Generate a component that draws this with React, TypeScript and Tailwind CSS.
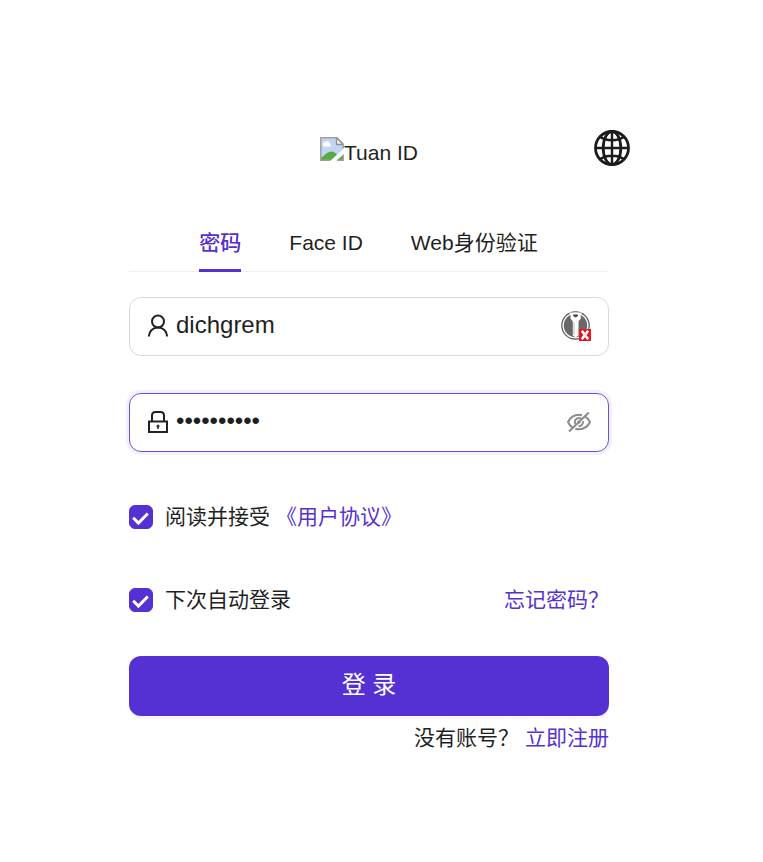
import { useState } from "react";

function BrokenImage() {
  return (
    <svg viewBox="0 0 24 24" className="h-6 w-6 shrink-0" aria-hidden="true">
      <path d="M0.8 0.8H17L23.2 7V13L12 23.2H0.8Z" fill="#c3d5f6" />
      <path d="M3 8.5a2.2 2.2 0 0 1 2-3.3a2.6 2.6 0 0 1 4.6 1.2a1.6 1.6 0 0 1 .4 3H4Z" fill="#fff" />
      <path d="M1 23V20.500C5 18.500 7 14.500 11.500 14.500C14 14.500 15.500 16 17 17.500L11 23Z" fill="#57ab40" />
      <path d="M24 11.500L10.500 24H15.500L24 16.500Z" fill="#fff" />
      <path d="M23 18V23H17Z" fill="#57ab40" />
      <path d="M16.500 0.800V7.500H23.200Z" fill="#f4f4f4" stroke="#909090" strokeWidth="1.3" />
      <path d="M10.500 23.200H0.800V0.800H17L23.200 7V11.500M23.200 17.500V23.200H17" fill="none" stroke="#a0a0a0" strokeWidth="1.5" />
    </svg>
  );
}

function Globe() {
  return (
    <svg viewBox="0 0 36 36" className="h-9 w-9" fill="none" stroke="#1c1c1c" strokeWidth="2.8" aria-hidden="true">
      <circle cx="18" cy="18" r="16.500" />
      <ellipse cx="18" cy="18" rx="8.800" ry="16.500" />
      <path d="M18 1.500V34.500M1.500 18H34.500M6.500 7C12 11.300 24 11.300 29.500 7M6.500 29C12 24.700 24 24.700 29.500 29" strokeWidth="2.400" />
    </svg>
  );
}

function UserIcon() {
  return (
    <svg viewBox="0 0 24 24" className="h-6 w-6 shrink-0" fill="none" stroke="#222" strokeWidth="2" aria-hidden="true">
      <circle cx="12" cy="7.500" r="6" />
      <path d="M2.800 22.500C3 17 7 13.500 12 13.500S21 17 21.200 22.500" />
    </svg>
  );
}

function LockIcon() {
  return (
    <svg viewBox="0 0 24 24" className="h-6 w-6 shrink-0" fill="none" stroke="#222" strokeWidth="2" aria-hidden="true">
      <path d="M3 11.500H21V22H3ZM6 11.500V5.500Q6 2 9.500 2H14.500Q18 2 18 5.500V11.500" />
      <path d="M12 16V19" strokeWidth="1.500" />
      <circle cx="12" cy="16" r="0.500" />
    </svg>
  );
}

function KeyBadge() {
  return (
    <svg viewBox="0 0 30 30" className="h-[30px] w-[30px]" aria-hidden="true">
      <circle cx="14.500" cy="14.500" r="13.700" fill="#fff" stroke="#555" strokeWidth="1.200" />
      <circle cx="14.500" cy="14.500" r="11.700" fill="#686868" />
      <path d="M8 1.500L9.500 4L9.500 7.500L11.800 10.500V24.500L14.500 26.500L17.500 24.500V10.500L19.800 7.500L19.800 4L21 1.500Z" fill="#fff" />
      <path d="M12.200 3.500H17V5L14.500 6.500L12.200 5Z" fill="#444" />
      <path d="M13 11.500V24" stroke="#bbb" strokeWidth="1" />
      <path d="M18 18H30V30H18Z" fill="#e81620" />
      <path d="M20.800 19.700L27.200 28.200M27.200 19.700L20.800 28.200" stroke="#fff" strokeWidth="2.500" />
    </svg>
  );
}

function EyeOff() {
  return (
    <svg viewBox="0 0 24 24" className="h-6 w-6" fill="none" stroke="#8c8c8c" strokeWidth="2" aria-hidden="true">
      <path d="M17.500 6.200C20 7.500 21.800 9.500 23 12C20.700 16.800 17 19.200 12 19.200Q10 19.200 8.300 18.700M5.500 17.500C3.500 16.200 2 14.300 1 12C3.300 7.200 7 4.800 12 4.800Q13.500 4.800 15 5.200" />
      <path d="M14.500 8.600Q13.300 7.900 12 7.900A4.100 4.100 0 0 0 8.500 14.300M16 11.300A4.100 4.100 0 0 1 11.500 16.100" />
      <path d="M12.800 11.300L11.200 12.900" strokeWidth="3" />
      <path d="M2 21.500L21.800 2.500" />
    </svg>
  );
}

function Check({ id }: { id: string }) {
  return (
    <span className="grid h-6 w-6 shrink-0">
      <input
        id={id}
        type="checkbox"
        defaultChecked
        className="peer col-start-1 row-start-1 h-6 w-6 appearance-none rounded-md border border-[#d9d9d9] checked:border-[#5531d3] checked:bg-[#5531d3]"
      />
      <svg
        viewBox="0 0 24 24"
        className="pointer-events-none invisible col-start-1 row-start-1 h-6 w-6 peer-checked:visible"
        fill="none"
        stroke="#fff"
        strokeWidth="3"
        aria-hidden="true"
      >
        <path d="M4.200 12.800L9.400 18L18.800 8.500" />
      </svg>
    </span>
  );
}

const tabs = ["密码", "Face ID", "Web身份验证"];

export default function App() {
  const [active, setActive] = useState(0);
  const [visible, setVisible] = useState(false);

  return (
    <div className="min-h-screen bg-white pt-[130px] pr-[25px] font-['Liberation_Sans','Noto_Sans_CJK_SC',sans-serif] text-[21px] leading-8 text-[#1f1f1f]">
      <main className="mx-auto max-w-[522px]">
        <header className="grid grid-cols-[1fr_auto_1fr] items-start">
          <div className="col-start-2 flex items-start pt-[7px]">
            <BrokenImage />
            <span>Tuan ID</span>
          </div>
          <button type="button" aria-label="语言" className="justify-self-end">
            <Globe />
          </button>
        </header>

        <form className="px-[21px]" onSubmit={(e) => e.preventDefault()}>
          <div role="tablist" className="mt-[46px] flex justify-center gap-12 border-b border-[#f0f0f0] pr-px">
            {tabs.map((tab, i) => (
              <button
                key={tab}
                type="button"
                role="tab"
                aria-selected={active === i}
                onClick={() => setActive(i)}
                className={`-mb-px border-b-[3px] pt-3 pb-[10px] ${
                  active === i
                    ? "border-[#5531d3] text-[#5531d3] [text-shadow:0_0_0.25px_currentcolor]"
                    : "border-transparent"
                }`}
              >
                {tab}
              </button>
            ))}
          </div>

          <div className="mt-[25px] flex h-[59px] items-center gap-1.5 rounded-xl border border-[#d9d9d9] pr-[17px] pb-0.5 pl-4">
            <label htmlFor="account" aria-label="账号">
              <UserIcon />
            </label>
            <input
              id="account"
              type="text"
              defaultValue="dichgrem"
              className="h-9 min-w-0 flex-1 bg-transparent pb-0.5 text-2xl outline-none"
            />
            <KeyBadge />
          </div>

          <div className="mt-[37px] flex h-[59px] items-center gap-1.5 rounded-xl border border-[#704fd8] pr-[17px] pb-0.5 pl-4 shadow-[0_0_0_3px_#f3effd]">
            <label htmlFor="password" aria-label="密码">
              <LockIcon />
            </label>
            <input
              id="password"
              type={visible ? "text" : "password"}
              defaultValue="abcdefghij"
              className="h-9 min-w-0 flex-1 bg-transparent pb-0.5 text-2xl outline-none"
            />
            <button type="button" aria-label="显示密码" onClick={() => setVisible(!visible)}>
              <EyeOff />
            </button>
          </div>

          <div className="mt-[49px] flex items-center">
            <Check id="terms" />
            <label htmlFor="terms" className="pl-3">
              阅读并接受
            </label>
            <a href="#terms" className="pl-1.5 text-[#5531d3]">
              《用户协议》
            </a>
          </div>

          <div className="mt-[51px] flex items-center">
            <Check id="remember" />
            <label htmlFor="remember" className="pl-3">
              下次自动登录
            </label>
            <a href="#forgot" className="ml-auto text-[#5531d3]">
              忘记密码？
            </a>
          </div>

          <button
            type="submit"
            className="mt-10 h-[60px] w-full rounded-xl bg-[#5531d3] pb-0.5 text-2xl text-white shadow-[0_3px_0_#f8f5fe]"
          >
            登 录
          </button>

          <p className="mt-1.5 flex justify-end">
            没有账号？
            <a href="#register" className="pl-1.5 text-[#5531d3]">
              立即注册
            </a>
          </p>
        </form>
      </main>
    </div>
  );
}
